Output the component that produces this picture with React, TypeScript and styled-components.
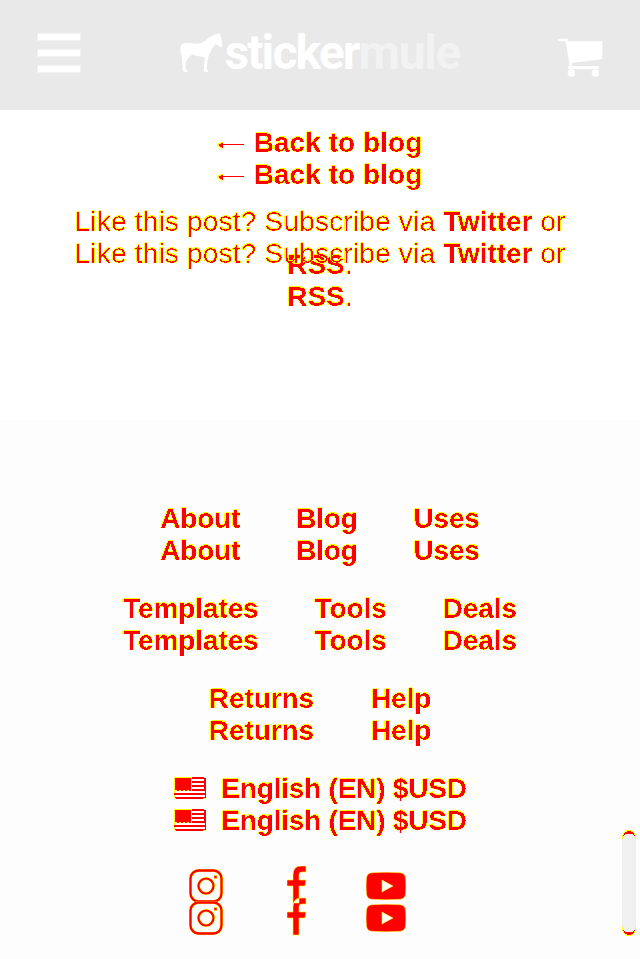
import React from "react";
import styled, { createGlobalStyle } from "styled-components";

const GlobalStyle = createGlobalStyle`
  * { box-sizing: border-box; }
  body { margin: 0; background: #fff; font-family: "Liberation Sans", Arial, sans-serif; }
`;

const Page = styled.div`
  position: relative;
  width: 640px;
  height: 959px;
  overflow: hidden;
  background: #fff;
`;

const Header = styled.header`
  height: 110px;
  padding: 0 37px;
  display: flex;
  justify-content: space-between;
  background: #e9e9e9;
`;

const MenuButton = styled.div`
  display: flex;
  flex-direction: column;
  justify-content: space-between;
  width: 44px;
  height: 40px;
  margin-top: 33px;
`;

const MenuBar = styled.span`
  height: 8px;
  background: #fff;
  border: 1px solid #f2f2f2;
`;

const Brand = styled.div`
  display: flex;
  width: 282px;
  margin: 33px 0 0 3px;
`;

const BrandText = styled.span`
  margin-left: 2px;
  margin-top: -8px;
  font: 700 48px/56px Roboto, sans-serif;
  letter-spacing: -1.9px;
  color: #fff;
  white-space: nowrap;
`;

const BrandTail = styled.span`
  letter-spacing: -1.4px;
  color: #f2f2f2;
`;

const CartIcon = styled.svg`
  margin-top: 38px;
`;

const Article = styled.main`
  height: 310px;
  padding-top: 17px;
  display: flex;
  flex-direction: column;
  align-items: center;
`;

const Footer = styled.footer`
  height: 539px;
  padding-top: 83px;
  display: flex;
  flex-direction: column;
  align-items: center;
  background: #fdfdfd;
`;

const Echoed = styled.div`
  display: flex;
  flex-direction: column;
  filter: url(#edge);
`;

const Line = styled.div<{ $spacing?: number; $gap?: number }>`
  display: flex;
  align-items: center;
  justify-content: center;
  gap: ${(p) => p.$gap ?? 0}px;
  height: 32px;
  font-size: 28px;
  line-height: 32px;
  font-weight: 700;
  letter-spacing: ${(p) => p.$spacing ?? 0}px;
  white-space: pre;
`;

const Post = styled.div`
  position: relative;
  width: 500px;
  margin-top: 9px;
`;

const PostCopy = styled.p<{ $echo?: boolean }>`
  margin: 0;
  font-size: 28px;
  line-height: 43px;
  letter-spacing: 0.2px;
  text-align: center;
  position: ${(p) => (p.$echo ? "absolute" : "static")};
  top: 32px;
  left: 0;
  width: 500px;
`;

const PostLine = styled.span`
  display: flex;
  justify-content: center;
  white-space: pre;
`;

const Plain = styled.span`
  filter: url(#edge-light);
`;

const Strong = styled.span`
  font-weight: 700;
  letter-spacing: -0.1px;
  filter: url(#edge);
`;

const Nav = styled.nav`
  display: flex;
  flex-direction: column;
  align-items: center;
  gap: 26px;
`;

const Socials = styled.div`
  display: flex;
  align-items: flex-start;
  width: 264px;
  margin-top: 29px;
`;

const InstagramIcon = styled.svg`
  margin: 2px 63px 0 0;
`;

const FacebookIcon = styled.svg`
  margin-right: 59px;
`;

const YoutubeIcon = styled.svg`
  margin-top: 6px;
`;

const ScrollThumb = styled.div`
  position: absolute;
  right: 4px;
  top: 829px;
`;

const FilterDefs = styled.svg`
  position: absolute;
  width: 0;
  height: 0;
`;

/* Red fill for solid coverage, yellow for partially covered edge pixels. */
const EdgeFilter = ({ id, green, alpha }: { id: string; green: string; alpha: string }) => (
  <filter id={id} x="-5%" y="-5%" width="110%" height="110%" colorInterpolationFilters="sRGB">
    <feColorMatrix in="SourceGraphic" values="0 0 0 0 1  0 0 0 1 0  0 0 0 0 0  0 0 0 1 0" />
    <feComponentTransfer result="core">
      <feFuncG type="discrete" tableValues={green} />
      <feFuncA type="discrete" tableValues={alpha} />
    </feComponentTransfer>
    <feColorMatrix in="SourceGraphic" values="0 0 0 0 1  0 0 0 0 1  0 0 0 0 0  0 0 0 1 0" />
    <feComponentTransfer result="halo">
      <feFuncA type="discrete" tableValues="0 0 0 1 1" />
    </feComponentTransfer>
    <feOffset in="halo" dx="-1" dy="0" result="left" />
    <feOffset in="halo" dx="0" dy="-1" result="top" />
    <feMerge>
      <feMergeNode in="left" />
      <feMergeNode in="top" />
      <feMergeNode in="core" />
    </feMerge>
  </filter>
);

const Edges = () => (
  <FilterDefs>
    <EdgeFilter id="edge" green="1 1 1 1 1 1 1 0 0 0" alpha="0 0 1 1 1 1 1 1 1 1" />
    <EdgeFilter id="edge-light" green="1 1 1 1 1 1 1 1 0 0" alpha="0 0 1 1 1 1 1 1 1 1" />
  </FilterDefs>
);

const Mule = () => (
  <svg width="43" height="40" viewBox="29 38 129 120">
    <path
      fill="#fff"
      d="M31 78Q34 67 48 67Q66 68 80 70Q93 71 103 63Q116 50 130 44L139 41L145 38L146 42L150 38L150 45Q152 52 155 65Q157 73 156 80Q149 84 145 76L137 72Q126 80 122 91Q115 103 113 114L108 146Q115 150 113 154Q105 158 101 152Q98 149 101 145L103 110Q84 111 66 102Q57 106 49 120Q43 128 46 146Q54 151 50 154Q41 157 38 151L35 122Q35 110 33 104Q29 96 31 78Z"
    />
  </svg>
);

const Arrow = () => (
  <svg width="28" height="12" viewBox="0 0 28 12" shapeRendering="crispEdges">
    <path d="M0 5h1v-1h2v-1h3v7h-2v-1h-1v-1h-2v-1h-1z" fill="#ff0" />
    <path d="M2 5h2v-1h2v1h21v1h-21v3h-1v-1h-2v-1h-1z" fill="red" />
  </svg>
);

const Flag = () => (
  <svg width="32" height="22" viewBox="0 0 32 22" shapeRendering="crispEdges">
    <path
      fill="red"
      d="M18 0h12v2h-12zM18 4h13v2h-13zM18 8h13v2h-13zM18 12h13v2h-13zM0 16h31v2h-31zM1 20h29v2h-29zM30 1h2v20h-2z"
    />
    <path fill="#fff" d="M18 2h12v2h-12zM18 6h12v2h-12zM18 10h12v2h-12zM1 14h30v2h-30zM1 18h30v2h-30z" />
    <path fill="#ff0" d="M0 0h18v14h-18zM0 14h1v2h-1zM0 18h1v2h-1zM0 21h2v1h-2zM29 21h2v1h-2z" />
    <path fill="red" d="M1 1h16v12h-16zM3 13h2v1h-2zM7 13h2v1h-2zM11 13h2v1h-2zM15 13h2v1h-2zM0 16h18v1h-18z" />
  </svg>
);

const InstagramShape = ({ y }: { y: number }) => (
  <g transform={`translate(0 ${y})`} fill="none">
    <rect x="1.5" y="1.5" width="31" height="31" rx="8" stroke="#ff0" strokeWidth="3" />
    <rect x="1.5" y="1.5" width="31" height="31" rx="8" stroke="red" strokeWidth="2.300" />
    <circle cx="17" cy="17" r="7.5" stroke="#ff0" strokeWidth="3" />
    <circle cx="17" cy="17" r="7.5" stroke="red" strokeWidth="2.200" />
    <rect x="25" y="6.5" width="3" height="3" fill="red" stroke="#ff0" strokeWidth=".6" />
  </g>
);

const YoutubeShape = ({ y }: { y: number }) => (
  <path
    transform={`translate(0 ${y})`}
    fill="red"
    stroke="#ff0"
    strokeWidth=".5"
    fillRule="evenodd"
    d="M6 .7Q20-.2 34 .7Q39 1 39.5 6Q40.3 14 39.5 22Q39 27 34 27.3Q20 28.2 6 27.3Q1 27 .5 22Q-.3 14 .5 6Q1 1 6 .7ZM16 8V20L27 14Z"
  />
);

const facebook = (y: number) =>
  `M6 ${y + 37}V${y + 20}H0V${y + 14}H6V${y + 9}Q6 ${y} 14 ${y}H19V${y + 6}H15Q12 ${y + 6} 12 ${y + 9}V${y + 14}H19L18 ${y + 20}H12V${y + 37}Z`;

const Twice = ({ children, gap, spacing }: { children: React.ReactNode; gap?: number; spacing?: number }) => (
  <Echoed>
    {[0, 1].map((i) => (
      <Line key={i} $gap={gap} $spacing={spacing}>{children}</Line>
    ))}
  </Echoed>
);

const Subscribe = ({ echo }: { echo?: boolean }) => (
  <PostCopy $echo={echo}>
    <PostLine>
      <Plain>Like this post? Subscribe via </Plain>
      <Strong>Twitter</Strong>
      <Plain> or</Plain>
    </PostLine>
    <PostLine>
      <Strong>RSS</Strong>
      <Plain>.</Plain>
    </PostLine>
  </PostCopy>
);

const BackLink = styled.div`
  display: grid;
  grid-template-columns: 28px 170px;
  column-gap: 8px;
  height: 64px;
`;

const ArrowColumn = styled.div`
  display: grid;
  grid-template-rows: 32px 32px;
  align-items: center;
  padding-top: 2px;
`;

const Language = styled.div`
  display: grid;
  grid-template-columns: 32px 244px;
  column-gap: 16px;
  height: 64px;
`;

const FlagColumn = styled.div`
  display: grid;
  grid-template-rows: 32px 32px;
  padding-top: 4px;
`;

const linkRows = [
  { items: ["About", "Blog", "Uses"], gap: 56, spacing: -0.2 },
  { items: ["Templates", "Tools", "Deals"], gap: 56, spacing: -0.1 },
  { items: ["Returns", "Help"], gap: 57, spacing: -0.1 },
];

export default function App() {
  return (
    <Page>
      <GlobalStyle />
      <Edges />
      <Header>
        <MenuButton>
          <MenuBar />
          <MenuBar />
          <MenuBar />
        </MenuButton>
        <Brand>
          <Mule />
          <BrandText>
            sticker<BrandTail>mule</BrandTail>
          </BrandText>
        </Brand>
        <CartIcon width="46" height="40" viewBox="711 115 138 120">
          <path
            d="M717 121H740L752 190V203"
            fill="none"
            stroke="#fff"
            strokeWidth="8"
            strokeLinejoin="round"
            strokeLinecap="round"
          />
          <path
            d="M743 128H844V176L752 187Z"
            fill="#fff"
            stroke="#fff"
            strokeWidth="6"
            strokeLinejoin="round"
          />
          <path d="M749 204H832" stroke="#fff" strokeWidth="10" strokeLinecap="round" />
          <circle cx="754" cy="220" r="11" fill="#fff" />
          <circle cx="826" cy="220" r="11" fill="#fff" />
        </CartIcon>
      </Header>
      <Article>
        <BackLink>
          <ArrowColumn>
            <Arrow />
            <Arrow />
          </ArrowColumn>
          <Twice spacing={0.05}>Back to blog</Twice>
        </BackLink>
        <Post>
          <Subscribe />
          <Subscribe echo />
        </Post>
      </Article>
      <Footer>
        <Nav>
          {linkRows.map((row) => (
            <Twice key={row.items[0]} gap={row.gap} spacing={row.spacing}>
              {row.items.map((item) => (
                <span key={item}>{item}</span>
              ))}
            </Twice>
          ))}
          <Language>
            <FlagColumn>
              <Flag />
              <Flag />
            </FlagColumn>
            <Twice spacing={-0.2}>English (EN) $USD</Twice>
          </Language>
        </Nav>
        <Socials>
          <InstagramIcon width="36" height="68" viewBox="-1 -1 36 68">
            <InstagramShape y={0} />
            <InstagramShape y={32} />
          </InstagramIcon>
          <FacebookIcon width="20" height="70" viewBox="0 0 20 70">
            <path d={facebook(0) + facebook(32)} fill="red" fillRule="evenodd" stroke="#ff0" strokeWidth=".6" />
          </FacebookIcon>
          <YoutubeIcon width="40" height="61" viewBox="0 0 40 61">
            <YoutubeShape y={0} />
            <YoutubeShape y={32} />
          </YoutubeIcon>
        </Socials>
      </Footer>
      <ScrollThumb>
        <svg width="14" height="108" viewBox="0 0 14 108" shapeRendering="crispEdges">
          <path d="M0 10Q0 1 7 1Q14 1 14 10V98Q14 107 7 107Q0 107 0 98Z" fill="#ff0" />
          <path d="M1 7Q3 2 7 2Q11 2 13 7V101Q11 106 7 106Q3 106 1 101Z" fill="red" />
          <path d="M0 12Q1 5 5 5H9Q13 5 14 12V96Q13 103 9 103H5Q1 103 0 96Z" fill="#f0f0f0" />
        </svg>
      </ScrollThumb>
    </Page>
  );
}
